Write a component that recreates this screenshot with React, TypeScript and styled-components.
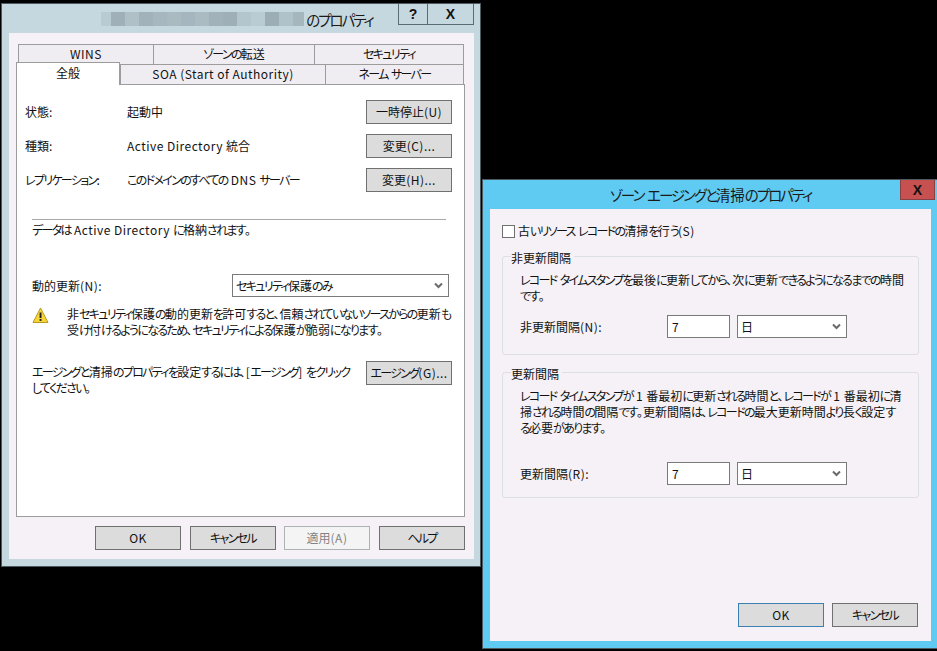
import React from "react";
import styled, { createGlobalStyle } from "styled-components";

const GlobalStyle = createGlobalStyle`
  html, body {
    margin: 0;
    padding: 0;
    background: #000;
  }
  body {
    font-family: "Noto Sans CJK JP", "Noto Sans", sans-serif;
    font-size: 12px;
    line-height: 16px;
    color: #111;
    font-feature-settings: "palt" 1;
  }
`;

const Desktop = styled.div`
  position: relative;
  width: 937px;
  height: 651px;
  overflow: hidden;
  background: #000;
`;

const Window = styled.div<{ $left: number; $top: number; $width: number; $height: number; $frame: string }>`
  position: absolute;
  left: ${(p) => p.$left}px;
  top: ${(p) => p.$top}px;
  width: ${(p) => p.$width}px;
  height: ${(p) => p.$height}px;
  box-sizing: border-box;
  display: flex;
  flex-direction: column;
  background: ${(p) => p.$frame};
  border: 1px solid #4d5a60;
  padding: 0 6px 7px 7px;
`;

const TitleBar = styled.div`
  height: 29px;
  flex: none;
  display: flex;
  align-items: center;
  justify-content: center;
  box-sizing: border-box;
  font-size: 14.5px;
  color: #1a1a1a;
`;

const SheetTitleBar = styled(TitleBar)`
  padding: 2px 9px 0 0;
`;

const Mosaic = styled.div`
  display: flex;
  height: 14px;
  margin-right: 2px;
  margin-top: -2px;
`;

const MosaicCell = styled.span<{ $c: string; $w: number }>`
  width: ${(p) => p.$w}px;
  background: ${(p) => p.$c};
`;

const HelpControls = styled.div`
  position: absolute;
  top: 0;
  right: 6px;
  display: flex;
  height: 20px;
  border: 1px solid #5b6b72;
  border-top: none;
`;

const HelpControl = styled.div<{ $w: number }>`
  width: ${(p) => p.$w}px;
  display: flex;
  align-items: center;
  justify-content: center;
  font-family: "Liberation Sans", sans-serif;
  font-weight: 700;
  font-size: 14px;
  color: #111;
  & + & {
    border-left: 1px solid #5b6b72;
  }
`;

const CloseControl = styled.div`
  position: absolute;
  top: 0;
  right: 2px;
  width: 35px;
  height: 20px;
  box-sizing: border-box;
  display: flex;
  align-items: center;
  justify-content: center;
  background: #c75050;
  border: 1px solid #8a4040;
  border-top: none;
  font-family: "Liberation Sans", sans-serif;
  font-weight: 700;
  font-size: 14px;
  color: #111;
`;

const Client = styled.div`
  flex: 1;
  min-height: 0;
  display: flex;
  flex-direction: column;
  background: #f5f1f6;
`;

const SheetClient = styled(Client)`
  padding: 11px 9px 9px 7px;
`;

const TabRow = styled.div<{ $inset: number }>`
  display: flex;
  height: 20px;
  padding-left: ${(p) => p.$inset}px;
`;

const Tab = styled.div<{ $w: number; $last?: boolean }>`
  width: ${(p) => p.$w}px;
  height: 20px;
  box-sizing: border-box;
  padding-bottom: 1px;
  display: flex;
  align-items: center;
  justify-content: center;
  background: #f0edf2;
  border-top: 1px solid #9c9c9c;
  border-left: 1px solid #9c9c9c;
  border-right: ${(p) => (p.$last ? "1px solid #9c9c9c" : "none")};
  white-space: pre;
`;

const ActiveTab = styled.div<{ $w: number }>`
  position: relative;
  z-index: 1;
  width: ${(p) => p.$w}px;
  height: 23px;
  margin-top: -2px;
  padding-bottom: 3px;
  box-sizing: border-box;
  display: flex;
  align-items: center;
  justify-content: center;
  background: #fff;
  border: 1px solid #9c9c9c;
  border-bottom: none;
`;

const Panel = styled.div`
  flex: 1;
  min-height: 0;
  background: #fff;
  border: 1px solid #9c9c9c;
  padding: 15px 12px 0 8px;
`;

const InfoRow = styled.div`
  display: grid;
  grid-template-columns: 102px 1fr 86px;
  align-items: center;
  height: 24px;
  margin-bottom: 10px;
`;

const Inset = styled.div`
  margin: 27px 0 0 7px;
`;

const Separator = styled.div`
  height: 1px;
  background: #a8a8a8;
  margin-right: 6px;
  margin-bottom: 2px;
`;

const UpdateRow = styled.div`
  display: flex;
  align-items: center;
  justify-content: space-between;
  margin-top: 36px;
  padding-right: 3px;
`;

const Select = styled.div<{ $w: number }>`
  width: ${(p) => p.$w}px;
  height: 23px;
  box-sizing: border-box;
  display: flex;
  align-items: center;
  justify-content: space-between;
  padding: 0 5px 0 3px;
  background: #fff;
  border: 1px solid #7a7a7a;
`;

const WarningRow = styled.div`
  display: flex;
  margin-top: 9px;
`;

const WarningIcon = styled.svg`
  flex: none;
  width: 17px;
  height: 17px;
  margin-right: 18px;
  margin-top: 1px;
`;

const AgingRow = styled.div`
  display: flex;
  justify-content: space-between;
  margin-top: 23px;
`;

const AgingText = styled.div`
  padding-top: 3px;
  white-space: nowrap;
`;

const Button = styled.button<{ $focus?: boolean }>`
  width: 86px;
  height: 24px;
  flex: none;
  box-sizing: border-box;
  padding: 0;
  background: #dcdcdc;
  border: 1px solid ${(p) => (p.$focus ? "#3c7fb1" : "#707070")};
  font: inherit;
  font-feature-settings: inherit;
  color: #111;
  &:disabled {
    background: #f4f4f4;
    border-color: #adb2b5;
    color: #838383;
  }
`;

const ApplyButton = styled(Button)`
  margin-left: -1px;
`;

const SheetFooter = styled.div`
  display: flex;
  justify-content: flex-end;
  gap: 9px;
  margin-top: 9px;
`;

const ZoneClient = styled(Client)`
  padding: 15px 12px 14px 12px;
`;

const CheckRow = styled.div`
  display: flex;
  align-items: center;
  gap: 3px;
  height: 14px;
`;

const CheckBox = styled.div`
  width: 13px;
  height: 13px;
  box-sizing: border-box;
  background: #fff;
  border: 1px solid #707070;
`;

const Group = styled.fieldset<{ $h: number; $gap: number }>`
  position: relative;
  height: ${(p) => p.$h}px;
  box-sizing: border-box;
  margin: ${(p) => p.$gap}px 0 0;
  padding: 15px 12px 0 17px;
  background: transparent;
  border: 1px solid #dcdfe3;
  border-radius: 3px;
  min-inline-size: 0;
`;

const GroupLegend = styled.legend`
  position: absolute;
  top: -7px;
  left: 8px;
  padding: 0 3px 0 0;
  background: #f5f1f6;
`;

const GroupText = styled.div`
  white-space: nowrap;
`;

const FieldRow = styled.div<{ $top: number }>`
  display: flex;
  align-items: center;
  margin-top: ${(p) => p.$top}px;
`;

const FieldLabel = styled.div`
  width: 147px;
`;

const NumberBox = styled.div`
  width: 63px;
  height: 23px;
  box-sizing: border-box;
  margin-right: 7px;
  padding-left: 4px;
  display: flex;
  align-items: center;
  background: #fff;
  border: 1px solid #7a7a7a;
`;

const ZoneFooter = styled.div`
  margin-top: auto;
  display: flex;
  justify-content: flex-end;
  gap: 8px;
  padding-right: 1px;
`;

// the screenshot font has very narrow kana and rather wide latin
const KanaRun = styled.span`
  letter-spacing: -0.14em;
`;

const LatinRun = styled.span`
  letter-spacing: 0.04em;
`;

const T = ({ children }: { children: string }) => (
  <>
    {children.match(/[\u3041-\u30ff]+|[\x20-\x7e]+|[^\u3041-\u30ff\x20-\x7e]+/g)?.map((run, i) => {
      if (/^[\u3041-\u30ff]/.test(run)) return <KanaRun key={i}>{run}</KanaRun>;
      if (/^[\x20-\x7e]/.test(run)) return <LatinRun key={i}>{run}</LatinRun>;
      return <React.Fragment key={i}>{run}</React.Fragment>;
    })}
  </>
);

const Chevron = () => (
  <svg width="9" height="7" viewBox="0 0 9 7">
    <path d="M1 1.5 L4.5 5 L8 1.5" fill="none" stroke="#6a6a6a" strokeWidth="2" />
  </svg>
);

const mosaic: [string, number][] = [
  ["#b8cbd2", 10], ["#9fb0b8", 14], ["#afc0c7", 14], ["#a2b2ba", 14], ["#a6b7bf", 14],
  ["#a9bac1", 14], ["#a6b6be", 14], ["#aabbc2", 14], ["#a2b2ba", 14], ["#9fafb7", 14],
  ["#b4c6cd", 14], ["#b9ccd3", 14], ["#9dadb5", 14], ["#b0c2c9", 14], ["#a5b6bd", 11],
];

export default function App() {
  return (
    <Desktop>
      <GlobalStyle />

      <Window $left={1} $top={3} $width={480} $height={564} $frame="#c5d8e0">
        <SheetTitleBar>
          <Mosaic>
            {mosaic.map(([c, w], i) => (
              <MosaicCell key={i} $c={c} $w={w} />
            ))}
          </Mosaic>
          <span><T>のプロパティ</T></span>
        </SheetTitleBar>
        <HelpControls>
          <HelpControl $w={28}>?</HelpControl>
          <HelpControl $w={45}>X</HelpControl>
        </HelpControls>
        <SheetClient>
          <TabRow $inset={2}>
            <Tab $w={135}><T>WINS</T></Tab>
            <Tab $w={161}><T>ゾーンの転送</T></Tab>
            <Tab $w={150} $last><T>セキュリティ</T></Tab>
          </TabRow>
          <TabRow $inset={0}>
            <ActiveTab $w={104}>全般</ActiveTab>
            <Tab $w={205}><T>SOA (Start of Authority)</T></Tab>
            <Tab $w={139} $last><T>ネーム サーバー</T></Tab>
          </TabRow>
          <Panel>
            <InfoRow>
              <span>状態:</span>
              <span>起動中</span>
              <Button><T>一時停止(U)</T></Button>
            </InfoRow>
            <InfoRow>
              <span>種類:</span>
              <span><T>Active Directory 統合</T></span>
              <Button><T>変更(C)...</T></Button>
            </InfoRow>
            <InfoRow>
              <span><T>レプリケーション:</T></span>
              <span><T>このドメインのすべての DNS サーバー</T></span>
              <Button><T>変更(H)...</T></Button>
            </InfoRow>
            <Inset>
              <Separator />
              <div><T>データは Active Directory に格納されます。</T></div>
              <UpdateRow>
                <span><T>動的更新(N):</T></span>
                <Select $w={217}>
                  <span><T>セキュリティ保護のみ</T></span>
                  <Chevron />
                </Select>
              </UpdateRow>
              <WarningRow>
                <WarningIcon viewBox="0 0 17 17">
                  <path d="M8.5 1 L16 15.5 H1 Z" fill="#f7d538" stroke="#b89a1c" strokeLinejoin="round" />
                  <rect x="7.6" y="5.5" width="1.9" height="5.5" fill="#222" />
                  <rect x="7.6" y="12" width="1.9" height="1.9" fill="#222" />
                </WarningIcon>
                <div>
                  <T>非セキュリティ保護の動的更新を許可すると、信頼されていないソースからの更新も</T>
                  <br />
                  <T>受け付けるようになるため、セキュリティによる保護が脆弱になります。</T>
                </div>
              </WarningRow>
              <AgingRow>
                <AgingText>
                  <T>エージングと清掃のプロパティを設定するには、[エージング] をクリック</T>
                  <br />
                  <T>してください。</T>
                </AgingText>
                <Button><T>エージング(G)...</T></Button>
              </AgingRow>
            </Inset>
          </Panel>
          <SheetFooter>
            <Button><T>OK</T></Button>
            <Button><T>キャンセル</T></Button>
            <ApplyButton disabled><T>適用(A)</T></ApplyButton>
            <Button><T>ヘルプ</T></Button>
          </SheetFooter>
        </SheetClient>
      </Window>

      <Window $left={482} $top={179} $width={456} $height={470} $frame="#5fcbf2">
        <TitleBar><span><T>ゾーン エージングと清掃のプロパティ</T></span></TitleBar>
        <CloseControl>X</CloseControl>
        <ZoneClient>
          <CheckRow>
            <CheckBox />
            <span><T>古いリソース レコードの清掃を行う(S)</T></span>
          </CheckRow>
          <Group $h={99} $gap={18}>
            <GroupLegend>非更新間隔</GroupLegend>
            <GroupText>
              <T>レコード タイムスタンプを最後に更新してから、次に更新できるようになるまでの時間</T>
              <br />
              <T>です。</T>
            </GroupText>
            <FieldRow $top={11}>
              <FieldLabel><T>非更新間隔(N):</T></FieldLabel>
              <NumberBox>7</NumberBox>
              <Select $w={110}>
                日
                <Chevron />
              </Select>
            </FieldRow>
          </Group>
          <Group $h={126} $gap={17}>
            <GroupLegend>更新間隔</GroupLegend>
            <GroupText>
              <T>レコード タイムスタンプが 1 番最初に更新される時間と、レコードが 1 番最初に清</T>
              <br />
              <T>掃される時間の間隔です。更新間隔は、レコードの最大更新時間より長く設定す</T>
              <br />
              <T>る必要があります。</T>
            </GroupText>
            <FieldRow $top={26}>
              <FieldLabel><T>更新間隔(R):</T></FieldLabel>
              <NumberBox>7</NumberBox>
              <Select $w={110}>
                日
                <Chevron />
              </Select>
            </FieldRow>
          </Group>
          <ZoneFooter>
            <Button $focus><T>OK</T></Button>
            <Button><T>キャンセル</T></Button>
          </ZoneFooter>
        </ZoneClient>
      </Window>
    </Desktop>
  );
}
